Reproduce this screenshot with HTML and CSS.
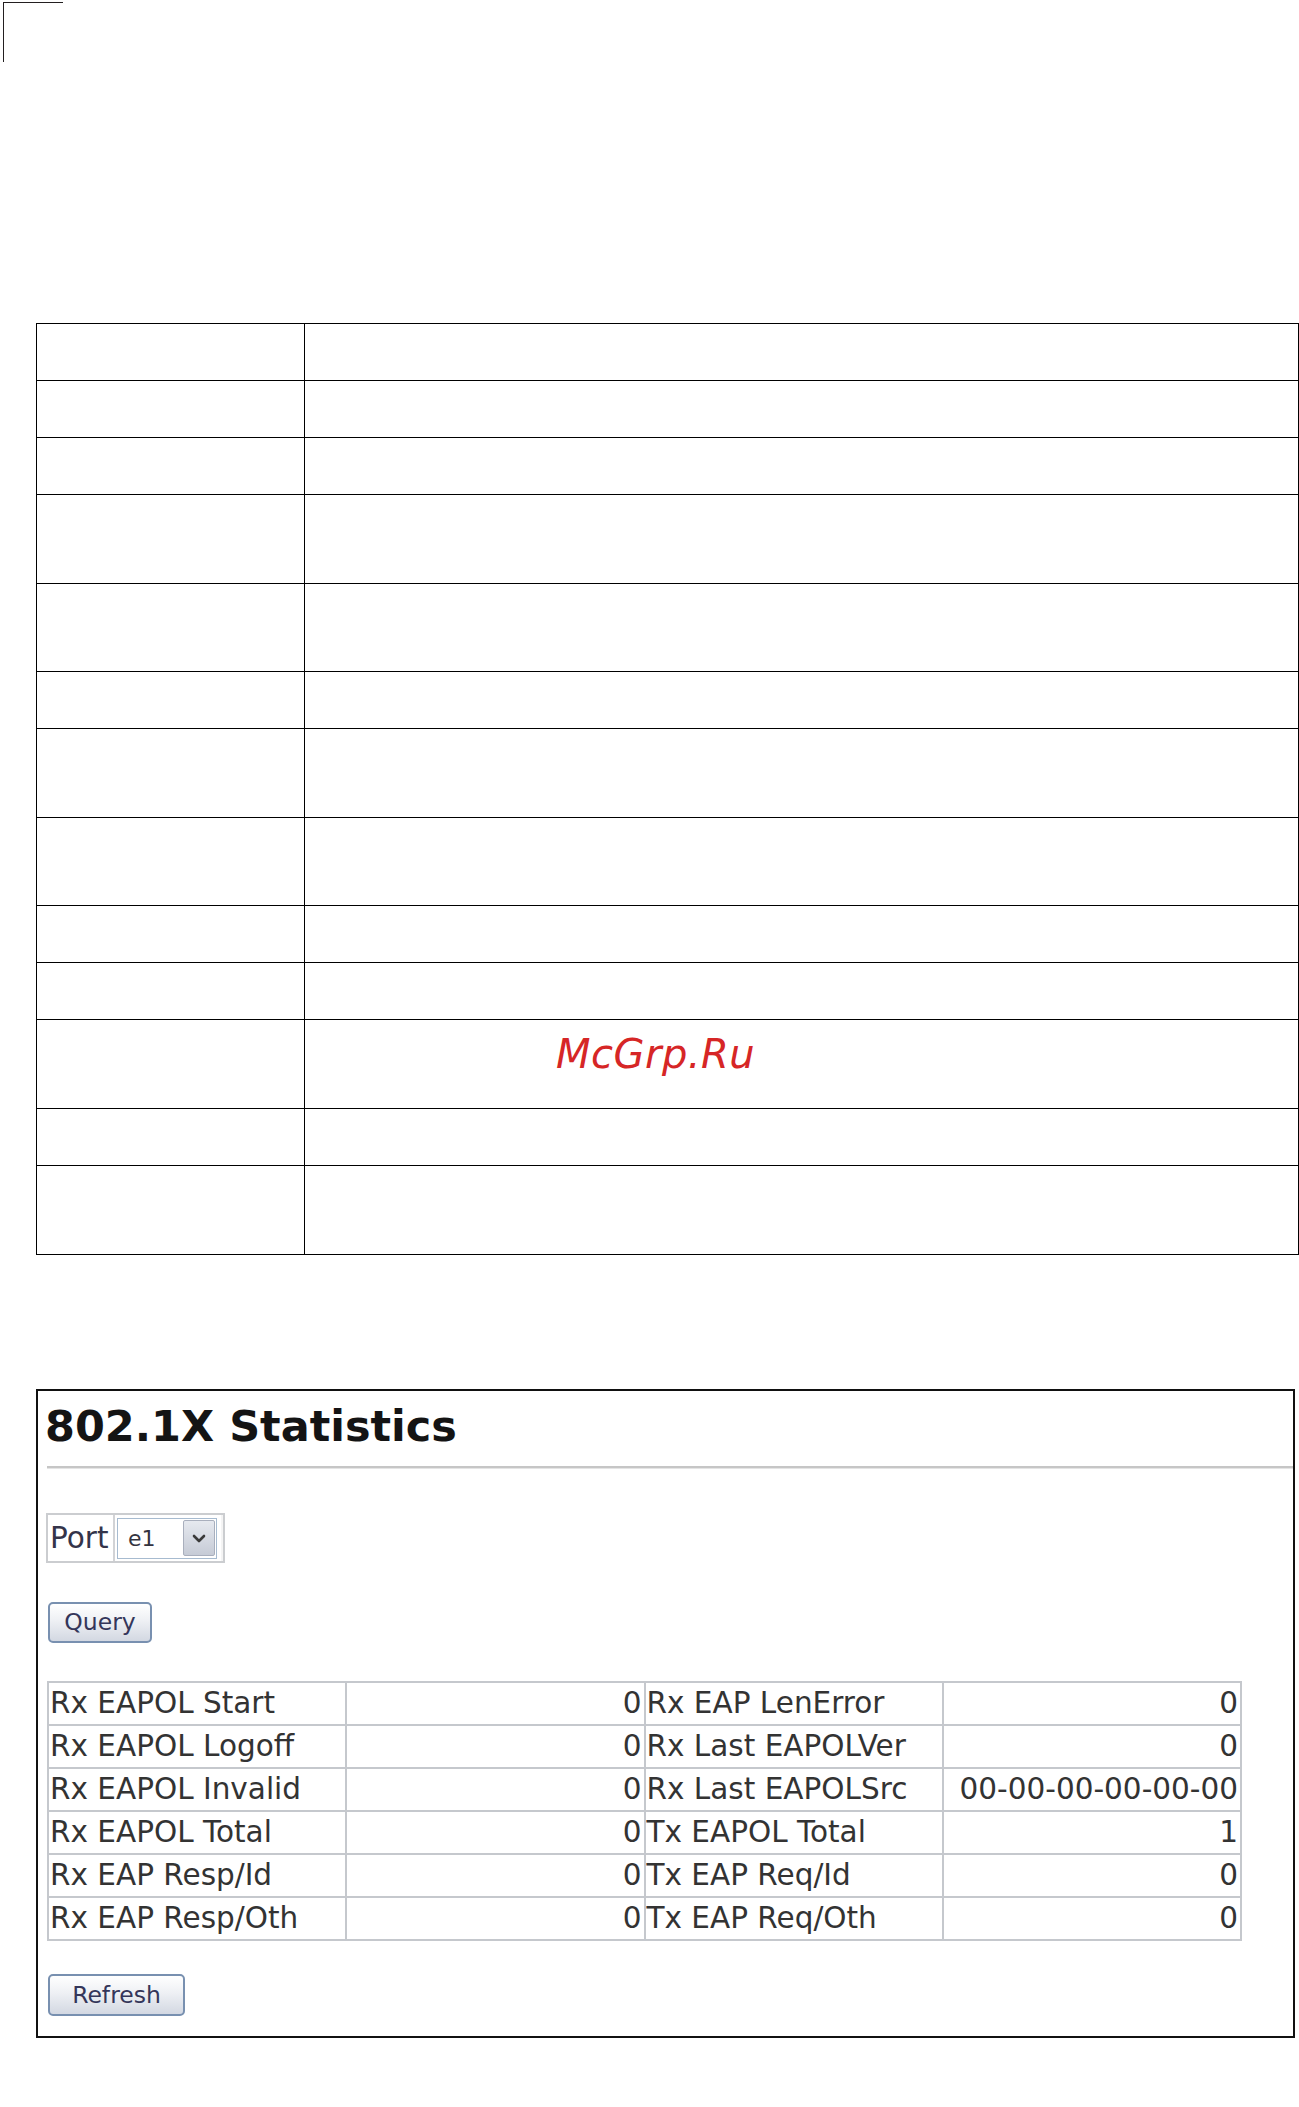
FILE: index.html
```html
<!DOCTYPE html>
<html lang="en">
<head>
<meta charset="utf-8">
<title>802.1X Statistics</title>
<link rel="stylesheet" href="styles.css">
</head>
<body>
<div class="crop-mark"></div>

<div class="spec">
  <div class="c"></div><div class="c"></div>
  <div class="c"></div><div class="c"></div>
  <div class="c"></div><div class="c"></div>
  <div class="c t"></div><div class="c t"></div>
  <div class="c t"></div><div class="c t"></div>
  <div class="c"></div><div class="c"></div>
  <div class="c t"></div><div class="c t"></div>
  <div class="c t"></div><div class="c t"></div>
  <div class="c"></div><div class="c"></div>
  <div class="c"></div><div class="c"></div>
  <div class="c t"></div><div class="c t"></div>
  <div class="c"></div><div class="c"></div>
  <div class="c t"></div><div class="c t"></div>
</div>

<div class="watermark">McGrp.Ru</div>

<section class="panel">
  <h1 class="title">802.1X Statistics</h1>
  <div class="rule"></div>

  <div class="portbox">
    <span class="portlabel">Port</span>
    <span class="portsel">
      <span class="select">
        <span class="selval">e1</span>
        <span class="selbtn">
          <svg width="14" height="9" viewBox="0 0 14 9"><path d="M2 2 L7 7 L12 2" fill="none" stroke="#3a3a3a" stroke-width="2.6" stroke-linecap="round" stroke-linejoin="round"/></svg>
        </span>
      </span>
    </span>
  </div>

  <button class="btn btn-query" type="button">Query</button>

  <table class="stats">
    <tr><td class="lbl">Rx EAPOL Start</td><td class="val">0</td><td class="lbl">Rx EAP LenError</td><td class="val">0</td></tr>
    <tr><td class="lbl">Rx EAPOL Logoff</td><td class="val">0</td><td class="lbl">Rx Last EAPOLVer</td><td class="val">0</td></tr>
    <tr><td class="lbl">Rx EAPOL Invalid</td><td class="val">0</td><td class="lbl">Rx Last EAPOLSrc</td><td class="val">00-00-00-00-00-00</td></tr>
    <tr><td class="lbl">Rx EAPOL Total</td><td class="val">0</td><td class="lbl">Tx EAPOL Total</td><td class="val">1</td></tr>
    <tr><td class="lbl">Rx EAP Resp/Id</td><td class="val">0</td><td class="lbl">Tx EAP Req/Id</td><td class="val">0</td></tr>
    <tr><td class="lbl">Rx EAP Resp/Oth</td><td class="val">0</td><td class="lbl">Tx EAP Req/Oth</td><td class="val">0</td></tr>
  </table>

  <button class="btn btn-refresh" type="button">Refresh</button>
</section>
</body>
</html>
```

FILE: styles.css
```css
html, body {
  margin: 0;
  padding: 0;
  background: #ffffff;
}

body {
  position: relative;
  font-family: "DejaVu Sans", Verdana, sans-serif;
  color: #333333;
}

.crop-mark {
  margin: 2px 0 0 3px;
  width: 60px;
  height: 60px;
  box-sizing: border-box;
  border-top: 1px solid #231f20;
  border-left: 1px solid #231f20;
}

.spec {
  display: grid;
  grid-template-columns: 268px 1fr;
  margin: 261px 0 0 36px;
  width: 1263px;
  box-sizing: border-box;
  border-top: 1px solid #000;
  border-left: 1px solid #000;
}

.spec .c {
  height: 57px;
  box-sizing: border-box;
  border-right: 1px solid #000;
  border-bottom: 1px solid #000;
}

.spec .c.t {
  height: 88.6px;
}

.watermark {
  position: absolute;
  left: 556px;
  top: 1031px;
  font-family: "DejaVu Sans", sans-serif;
  font-style: oblique;
  font-size: 40px;
  letter-spacing: 0.5px;
  color: #d62626;
  line-height: normal;
}

.panel {
  margin: 134px 0 0 36px;
  width: 1259px;
  box-sizing: border-box;
  border: 2px solid #111;
  padding: 11px 0 20px 9px;
}

.title {
  margin: 0 0 0 -2px;
  font-family: "DejaVu Sans", Verdana, sans-serif;
  font-weight: bold;
  font-size: 43px;
  line-height: 49px;
  height: 49px;
  color: #141414;
}

.rule {
  margin-top: 15px;
  height: 2px;
  background: #c6c6c6;
  border-bottom: 1px solid #e4e4e4;
}

.portbox {
  margin: 44px 0 0 -1px;
  display: flex;
  width: 179px;
  height: 50px;
  box-sizing: border-box;
  border: 2px solid #cbcdd0;
  background: #f4f4f4;
}

.portlabel {
  display: flex;
  align-items: center;
  width: 67px;
  box-sizing: border-box;
  padding-left: 2px;
  background: #fff;
  border-right: 2px solid #d2d3d6;
  font-size: 29.5px;
  color: #34344a;
}

.portsel {
  display: flex;
  padding: 3px 4px 2px 2px;
  background: #fff;
}

.select {
  display: flex;
  align-items: center;
  width: 100px;
  height: 41px;
  box-sizing: border-box;
  border: 1px solid #a7bbd0;
  background: #fff;
}

.selval {
  flex: 1;
  padding-left: 10px;
  font-size: 22px;
  color: #333340;
}

.selbtn {
  display: flex;
  align-items: center;
  justify-content: center;
  width: 32px;
  height: 36px;
  margin-right: 1px;
  box-sizing: border-box;
  border: 1px solid #a9afbd;
  border-radius: 2px;
  background: linear-gradient(#e6e9ef, #c6cbd6);
}

.btn {
  display: block;
  margin-left: 1px;
  box-sizing: border-box;
  border: 2px solid #7890b0;
  border-radius: 5px;
  background: linear-gradient(#ffffff 0%, #eef0f4 45%, #d3d8e2 100%);
  font-family: "DejaVu Sans", Verdana, sans-serif;
  font-size: 23.5px;
  color: #34365a;
  padding: 0;
  text-align: center;
}

.btn-query {
  margin-top: 39px;
  width: 104px;
  height: 41px;
}

.btn-refresh {
  margin-top: 33px;
  width: 137px;
  height: 42px;
}

.stats {
  margin-top: 38px;
  width: 1195px;
  border-collapse: collapse;
  table-layout: fixed;
  font-size: 29.5px;
  color: #333333;
}

.stats td {
  height: 43px;
  box-sizing: border-box;
  border: 2px solid #c5c8cd;
  padding: 0 2px 0 1px;
  line-height: 39px;
  white-space: nowrap;
  overflow: hidden;
}

.stats td.val {
  text-align: right;
}
```
